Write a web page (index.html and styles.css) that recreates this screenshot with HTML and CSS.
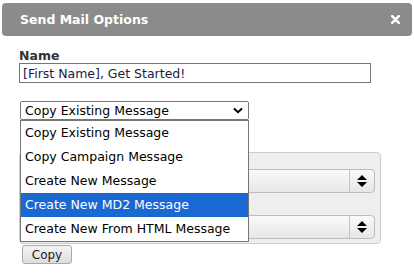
FILE: index.html
```html
<!DOCTYPE html>
<html lang="en">
<head>
    <meta charset="UTF-8">
    <title>Send Mail Options</title>
    <link rel="stylesheet" href="styles.css">
</head>
<body>
    <div class="dialog">
        <div class="dialog-title">
            <span>Send Mail Options</span>
            <svg class="dialog-close" width="9" height="9" viewBox="0 0 9 9">
                <path d="M1.2 1.2 L7.8 7.8 M7.8 1.2 L1.2 7.8" stroke="#fff" stroke-width="2.6" stroke-linecap="round"/>
            </svg>
        </div>

        <div class="dialog-body">
            <label class="field-label">Name</label>
            <input class="name-input" type="text" value="[First Name], Get Started!">

            <div class="select-wrap">
                <div class="fake-select">
                    <span>Copy Existing Message</span>
                    <svg class="chevron" width="10" height="7" viewBox="0 0 10 7">
                        <path d="M1 1.5 L5 5.2 L9 1.5" fill="none" stroke="#000" stroke-width="2"/>
                    </svg>
                </div>
                <ul class="select-menu">
                    <li>Copy Existing Message</li>
                    <li>Copy Campaign Message</li>
                    <li>Create New Message</li>
                    <li class="selected">Create New MD2 Message</li>
                    <li>Create New From HTML Message</li>
                </ul>
            </div>

            <div class="copy-area">
                <div class="copy-panel">
                    <div class="spin-field"><span class="spin-btn"><svg width="10" height="14" viewBox="0 0 10 14"><path d="M0 6 L5 1 L10 6 Z M0 8 L10 8 L5 13 Z" fill="#000"/></svg></span></div>
                    <div class="spin-field"><span class="spin-btn"><svg width="10" height="14" viewBox="0 0 10 14"><path d="M0 6 L5 1 L10 6 Z M0 8 L10 8 L5 13 Z" fill="#000"/></svg></span></div>
                </div>
                <button class="copy-btn">Copy</button>
            </div>
        </div>
    </div>
</body>
</html>
```

FILE: styles.css
```css
body {
    margin: 0;
    font-family: 'DejaVu Sans', Verdana, sans-serif;
    background-color: #fff;
    color: #000;
}

.dialog {
    padding: 3px 2px 0 2px;
}

.dialog-title {
    background-color: #8b8b8b;
    color: #fff;
    height: 33px;
    border-radius: 4px;
    display: flex;
    justify-content: space-between;
    align-items: center;
    padding: 0 12px 0 18px;
    font-weight: bold;
    font-size: 12.5px;
}

.dialog-body {
    padding: 12px 0 0 17px;
}

.field-label {
    display: block;
    font-weight: bold;
    font-size: 12.5px;
    color: #333;
    line-height: 15px;
}

.name-input {
    display: block;
    margin: 0;
    width: 352px;
    height: 20px;
    box-sizing: border-box;
    border: 1px solid #767676;
    padding: 0 3px;
    font-family: inherit;
    font-size: 12.5px;
    color: #1a1a40;
}

.select-wrap {
    position: relative;
    margin-top: 18px;
    margin-left: 1px;
    width: 229px;
    z-index: 2;
}

.fake-select {
    height: 19px;
    box-sizing: border-box;
    border: 1px solid #767676;
    border-radius: 2px;
    display: flex;
    justify-content: space-between;
    align-items: center;
    padding: 0 5px 0 4px;
    font-size: 12.5px;
    background-color: #fff;
}

.select-menu {
    position: absolute;
    top: 19px;
    left: 0;
    width: 229px;
    box-sizing: border-box;
    margin: 0;
    padding: 0;
    list-style: none;
    border: 1px solid #767676;
    background-color: #fff;
    font-size: 12.5px;
}

.select-menu li {
    height: 24px;
    line-height: 24px;
    padding-left: 4px;
}

.select-menu li.selected {
    background-color: #1a68d2;
    color: #fff;
}

.copy-area {
    padding-top: 32px;
}

.copy-panel {
    width: 362px;
    box-sizing: border-box;
    height: 92px;
    background-color: #eeeeee;
    border: 1px solid #cdcdcd;
    border-radius: 4px;
    padding: 16px 5px 0 0;
    display: flex;
    flex-direction: column;
    align-items: flex-end;
    gap: 22px;
}

.spin-field {
    width: 300px;
    height: 24px;
    box-sizing: border-box;
    border: 1px solid #bdbdbd;
    border-radius: 4px;
    background: linear-gradient(#fafafa, #e6e6e6);
    display: flex;
    justify-content: flex-end;
}

.spin-btn {
    width: 24px;
    border-left: 1px solid #c4c4c4;
    display: flex;
    align-items: center;
    justify-content: center;
}

.copy-btn {
    display: block;
    margin: 1px 0 0 3px;
    width: 50px;
    height: 19px;
    padding: 0;
    border: 1px solid #a9a9a9;
    border-radius: 3px;
    background: linear-gradient(#f4f4f4, #dedede);
    font-family: inherit;
    font-size: 12px;
    color: #222;
}
```
